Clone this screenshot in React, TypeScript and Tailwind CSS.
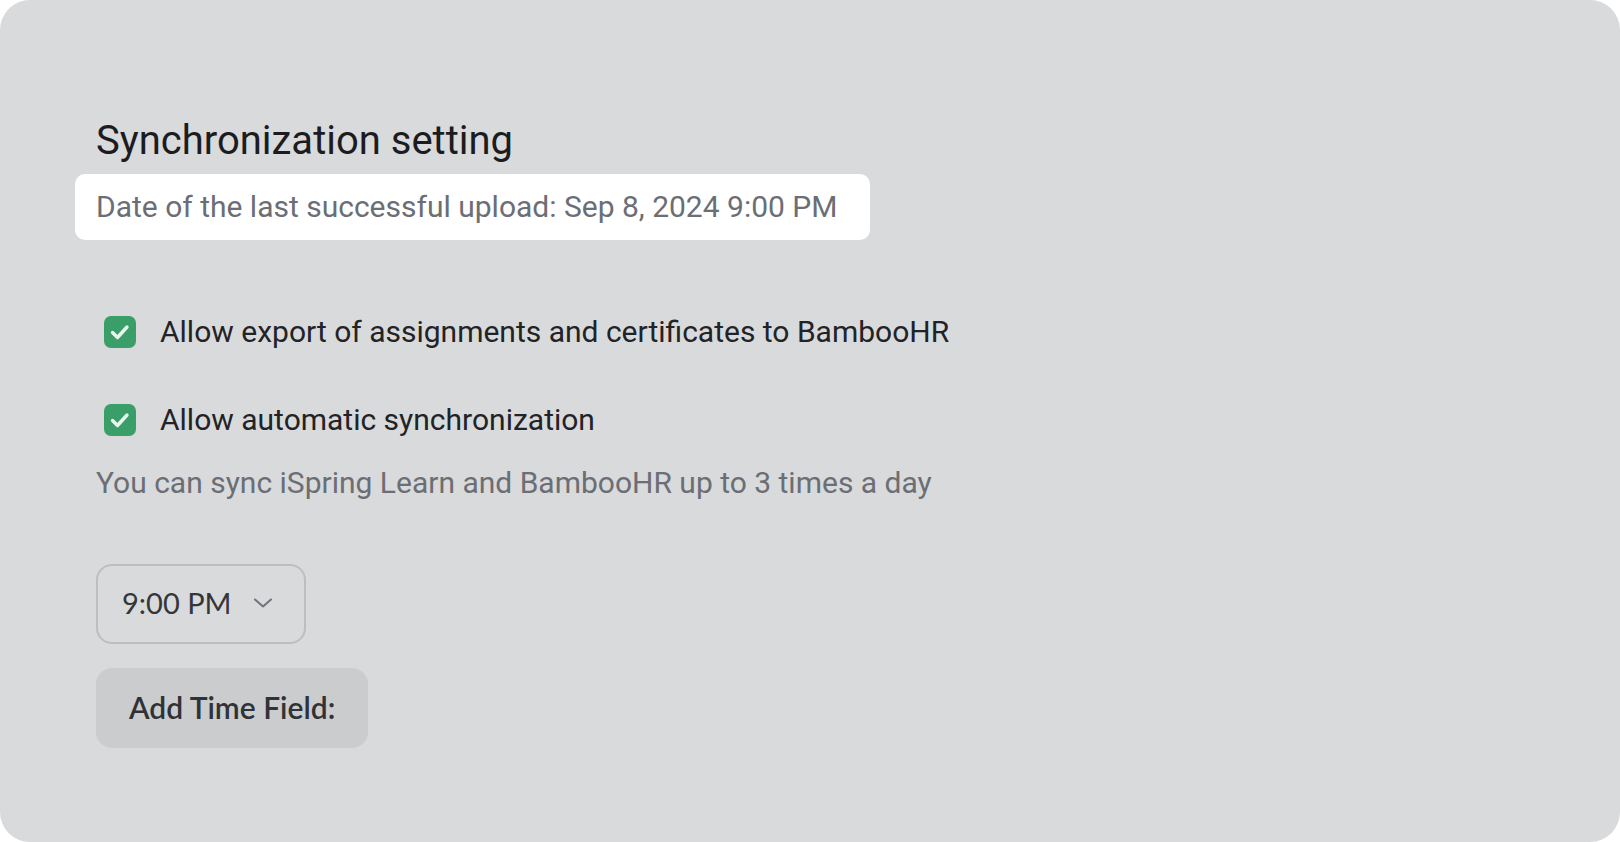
import { useState } from 'react';

function Checkbox({ checked, onChange }: { checked: boolean; onChange: () => void }) {
  return (
    <button
      onClick={onChange}
      className={`w-[32px] h-[32px] rounded-[7px] flex items-center justify-center shrink-0 ${
        checked ? 'bg-[#3a9e69]' : 'bg-white border-2 border-[#b8b9bc]'
      }`}
    >
      {checked && (
        <svg width="32" height="32" viewBox="0 0 32 32" fill="none">
          <path d="M8.5 16.5l5 5 9.5-10.5" stroke="#e8f5ee" strokeWidth="3.4" strokeLinecap="round" strokeLinejoin="round" />
        </svg>
      )}
    </button>
  );
}

export default function App() {
  const [allowExport, setAllowExport] = useState(true);
  const [allowAuto, setAllowAuto] = useState(true);

  return (
    <div className="w-[1620px] h-[842px] bg-white">
      <div className="w-full h-full rounded-[30px] bg-[#d9dadc] pl-[96px] pt-[117px] font-['Roboto',sans-serif]">
        {/* Header */}
        <h2 className="text-[40px] leading-[48px] text-[#1c1c1e] font-normal">Synchronization setting</h2>
        <div className="mt-[9px] -ml-[21px] inline-flex bg-white rounded-[10px] pl-[21px] pr-[33px] py-[15px]">
          <span className="text-[30px] leading-[36px] text-[#6b6e74]">
            Date of the last successful upload: Sep 8, 2024 9:00 PM
          </span>
        </div>

        {/* Options */}
        <div className="mt-[74px] flex flex-col gap-[52px] pl-[8px]">
          <label className="flex items-center gap-[24px] h-[36px]">
            <Checkbox checked={allowExport} onChange={() => setAllowExport(!allowExport)} />
            <span className="text-[30px] leading-[36px] text-[#222326]">
              Allow export of assignments and certificates to BambooHR
            </span>
          </label>
          <label className="flex items-center gap-[24px] h-[36px]">
            <Checkbox checked={allowAuto} onChange={() => setAllowAuto(!allowAuto)} />
            <span className="text-[30px] leading-[36px] text-[#222326]">Allow automatic synchronization</span>
          </label>
        </div>
        <p className="mt-[27px] text-[30px] leading-[36px] text-[#6b6e74]">
          You can sync iSpring Learn and BambooHR up to 3 times a day
        </p>

        {/* Time fields */}
        <div className="mt-[63px] flex flex-col items-start gap-[24px] font-['Lato',sans-serif]">
          <button className="w-[210px] h-[80px] rounded-[16px] border-2 border-[#bdbec1] flex items-center pl-[24px] gap-[21px] pb-[3px]">
            <span className="text-[29px] leading-[36px] text-[#34363a]">9:00 PM</span>
            <svg width="22" height="14" viewBox="0 0 22 14" fill="none">
              <path d="M3 3.5l8 7 8-7" stroke="#707378" strokeWidth="2" strokeLinecap="round" strokeLinejoin="round" />
            </svg>
          </button>
          <button className="h-[80px] px-[33px] pb-[3px] rounded-[16px] bg-[#cbccce] text-[30px] leading-[36px] font-semibold text-[#303236]">
            Add Time Field:
          </button>
        </div>
      </div>
    </div>
  );
}
